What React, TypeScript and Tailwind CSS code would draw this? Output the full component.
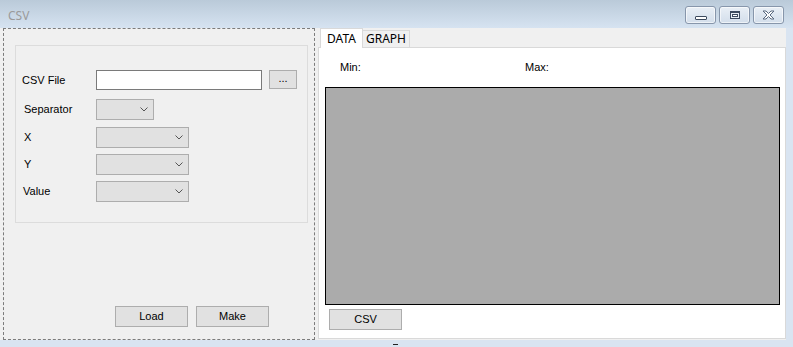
import React from "react";

const Chevron = () => (
  <svg width="8" height="5" viewBox="0 0 8 5" className="block">
    <path d="M0.5 0.5 L4 4 L7.5 0.5" fill="none" stroke="#555" strokeWidth="1" />
  </svg>
);

const Combo = ({ w }: { w: string }) => (
  <div className={`${w} h-[21px] bg-[#e1e1e1] border border-[#adadad] flex items-center justify-end pr-[5px]`}>
    <Chevron />
  </div>
);

const WinBtn = ({ children }: { children: React.ReactNode }) => (
  <div className="w-[31px] h-[18px] rounded-[3px] border border-[#8796ab] bg-gradient-to-b from-[#e9eff6] to-[#d3deeb] flex items-center justify-center shadow-[inset_0_0_0_1px_rgba(255,255,255,0.6)]">
    {children}
  </div>
);

export default function App() {
  const f = { fontFamily: '"Liberation Sans", Arial, sans-serif' };
  const seg = { fontFamily: '"Noto Sans", "Open Sans", sans-serif' };
  return (
    <div className="w-[793px] h-[347px] bg-[#d9e4f1] flex flex-col overflow-hidden text-black" style={f}>
      {/* title bar */}
      <div className="h-[28px] bg-gradient-to-b from-[#bacad9] to-[#d6e3f1] flex items-start">
        <div className="ml-[8px] mt-[8px] text-[12px] leading-[16px] text-[#9a9a9a]" style={seg}>CSV</div>
        <div className="ml-auto mr-[9px] mt-[6px] flex gap-[3px]">
          <WinBtn>
            <div className="w-[12px] h-[4px] mt-[6px] bg-white border border-[#3c4a5e] rounded-[1px]" />
          </WinBtn>
          <WinBtn>
            <div className="w-[10px] h-[8px] border border-[#3c4a5e] border-t-[2px] bg-[#e8eef5] flex items-center justify-center">
              <div className="w-[6px] h-[3px] border border-[#3c4a5e] bg-white" />
            </div>
          </WinBtn>
          <WinBtn>
            <svg width="13" height="10" viewBox="0 0 13 10">
              <path d="M1 1 L4 1 L6.5 3.5 L9 1 L12 1 L8 5 L12 9 L9 9 L6.5 6.5 L4 9 L1 9 L5 5 Z" fill="#ffffff" stroke="#5b6a80" strokeWidth="1" strokeLinejoin="round" />
            </svg>
          </WinBtn>
        </div>
      </div>

      {/* client */}
      <div className="flex">
        <div className="w-[786px] h-[312px] bg-[#f0f0f0] flex">
          {/* left panel */}
          <div className="ml-[3px] w-[312px] h-[312px] border border-dashed border-[#7c7c7c] flex flex-col">
            <div className="mt-[16px] ml-[11px] w-[293px] h-[178px] border border-[#dcdcdc] flex flex-col text-[11px]">
              <div className="mt-[24px] flex items-center h-[20px]">
                <div className="ml-[6px] w-[74px]">CSV File</div>
                <div className="w-[166px] h-[20px] bg-white border border-[#7a7a7a]" />
                <div className="ml-[7px] w-[28px] h-[19px] -mt-[1px] bg-[#e1e1e1] border border-[#adadad] flex items-center justify-center text-[11px] leading-none pb-[3px]">...</div>
              </div>
              <div className="mt-[9px] flex items-center">
                <div className="ml-[8px] w-[72px]">Separator</div>
                <Combo w="w-[58px]" />
              </div>
              <div className="mt-[7px] flex items-center">
                <div className="ml-[8px] w-[72px]">X</div>
                <Combo w="w-[93px]" />
              </div>
              <div className="mt-[6px] flex items-center">
                <div className="ml-[8px] w-[72px]">Y</div>
                <Combo w="w-[93px]" />
              </div>
              <div className="mt-[6px] flex items-center">
                <div className="ml-[7px] w-[73px]">Value</div>
                <Combo w="w-[93px]" />
              </div>
            </div>
            <div className="flex-1" />
            <div className="mb-[12px] ml-[111px] flex gap-[8px] text-[11px]">
              <div className="w-[73px] h-[21px] bg-[#e1e1e1] border border-[#adadad] flex items-center justify-center">Load</div>
              <div className="w-[73px] h-[21px] bg-[#e1e1e1] border border-[#adadad] flex items-center justify-center">Make</div>
            </div>
          </div>

          {/* right tab control */}
          <div className="ml-[3px] w-[468px] flex flex-col">
            <div className="h-[19px] flex items-end pl-[2px] relative z-10">
              <div className="w-[43px] h-[20px] bg-white border border-[#d9d9d9] border-b-0 flex items-center justify-center text-[12px] -mb-[1px]" style={seg}>DATA</div>
              <div className="w-[47px] h-[17px] bg-[#f0f0f0] border border-[#d9d9d9] border-l-0 border-b-0 flex items-center justify-center text-[12px]" style={seg}>GRAPH</div>
            </div>
            <div className="h-[292px] bg-white border border-[#d9d9d9] flex flex-col">
              <div className="h-[39px] flex items-center text-[11px]">
                <div className="ml-[21px] w-[185px]">Min:</div>
                <div>Max:</div>
              </div>
              <div className="ml-[6px] w-[455px] h-[218px] bg-[#ababab] border border-black" />
              <div className="mt-[4px] ml-[10px] w-[73px] h-[21px] bg-[#e1e1e1] border border-[#adadad] flex items-center justify-center text-[11px]">CSV</div>
            </div>
          </div>
        </div>
      </div>
      <div className="relative flex-1">
        <div className="absolute left-[393px] top-[4px] w-[5px] h-[1px] bg-[#222]" />
      </div>
    </div>
  );
}
